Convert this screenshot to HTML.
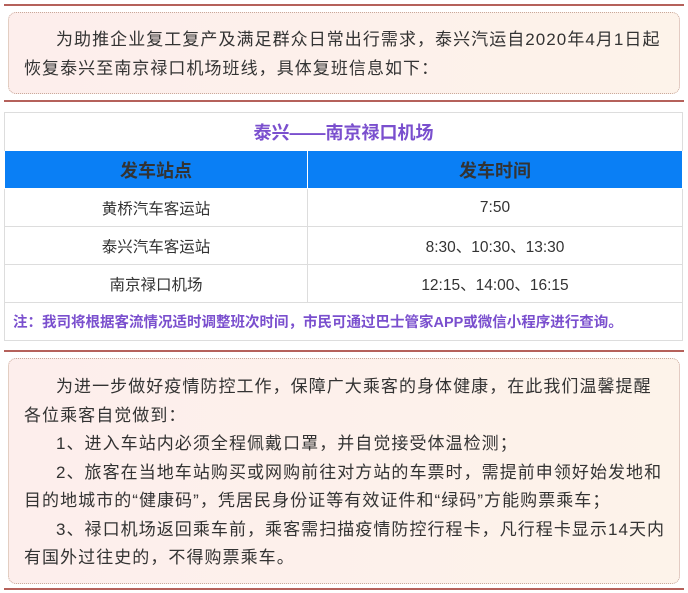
<!DOCTYPE html>
<html><head><meta charset="utf-8"><style>
*{margin:0;padding:0;box-sizing:border-box}
body{width:688px;height:593px;background:#fff;font-family:"Liberation Sans","Noto Sans CJK SC",sans-serif;color:#333;position:relative;overflow:hidden}
.outer{position:absolute;left:4px;width:680px;border-top:2px solid #b5615b;border-bottom:2px solid #b5615b;background:#fff}
.inner{position:absolute;left:4px;right:4px;border:1px dotted #c9a89a;border-radius:8px;background:linear-gradient(90deg,#fdeeec,#fdf3ea);font-size:17px;letter-spacing:1.05px;padding:0 0 0 15px;white-space:nowrap}
.inner p{line-height:28.5px}
.ind{display:inline-block;width:32px}
table{position:absolute;left:4px;top:112px;width:679px;border-collapse:collapse;font-size:15.5px}
td{border:1px solid #ddd;text-align:center;height:38px}
.t{color:#7a4fce;font-weight:bold;font-size:18px;border-bottom:none}
.h td{background:#0a7ff5;color:#333;font-weight:bold;font-size:18px;border-color:#fff}
.n{color:#7a4fce;font-weight:bold;font-size:14.5px;text-align:left;padding-left:8px;white-space:nowrap}
</style></head><body>
<div class="outer" style="top:4px;height:98px">
 <div class="inner" style="top:6px;height:82px;padding-top:12px"><p style="line-height:29px"><span class="ind"></span>为助推企业复工复产及满足群众日常出行需求，泰兴汽运自2020年4月1日起<br>恢复泰兴至南京禄口机场班线，具体复班信息如下：</p></div>
</div>
<table>
<tr><td colspan="2" class="t">泰兴——南京禄口机场</td></tr>
<tr class="h"><td style="width:303px">发车站点</td><td>发车时间</td></tr>
<tr><td>黄桥汽车客运站</td><td>7:50</td></tr>
<tr><td>泰兴汽车客运站</td><td>8:30、10:30、13:30</td></tr>
<tr><td>南京禄口机场</td><td>12:15、14:00、16:15</td></tr>
<tr><td colspan="2" class="n">注：我司将根据客流情况适时调整班次时间，市民可通过巴士管家APP或微信小程序进行查询。</td></tr>
</table>
<div class="outer" style="top:350px;height:240px">
 <div class="inner" style="top:6px;height:226px;padding-top:14px">
 <p><span class="ind"></span>为进一步做好疫情防控工作，保障广大乘客的身体健康，在此我们温馨提醒<br>各位乘客自觉做到：</p>
 <p><span class="ind"></span>1、进入车站内必须全程佩戴口罩，并自觉接受体温检测；</p>
 <p><span class="ind"></span>2、旅客在当地车站购买或网购前往对方站的车票时，需提前申领好始发地和<br>目的地城市的“健康码”，凭居民身份证等有效证件和“绿码”方能购票乘车；</p>
 <p><span class="ind"></span>3、禄口机场返回乘车前，乘客需扫描疫情防控行程卡，凡行程卡显示14天内<br>有国外过往史的，不得购票乘车。</p>
 </div>
</div>
</body></html>
